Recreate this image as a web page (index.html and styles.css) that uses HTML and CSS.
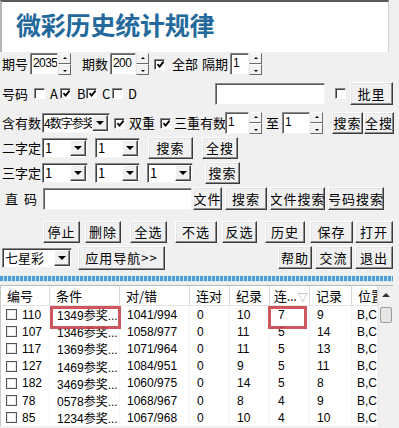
FILE: index.html
```html
<!DOCTYPE html>
<html lang="zh">
<head>
<meta charset="utf-8">
<title>微彩历史统计规律</title>
<link rel="stylesheet" href="styles.css">
</head>
<body>
<div class="app">
  <div class="header"><div class="title">微彩历史统计规律</div></div>

  <div class="row r1">
    <span class="lbl ml-2 w-28">期号</span>
    <div class="spin w-41"><span class="field">2035</span><span class="sbtns"><i class="sb up"></i><i class="sb dn"></i></span></div>
    <span class="lbl ml-11 w-28">期数</span>
    <div class="spin w-39"><span class="field">200</span><span class="sbtns"><i class="sb up"></i><i class="sb dn"></i></span></div>
    <span class="cb on ml-5"><svg viewBox="0 0 9 9"><path d="M1.5 4.2 L3.6 6.5 L7.6 1.6"/></svg></span>
    <span class="lbl ml-7 w-30">全部</span>
    <span class="lbl w-28">隔期</span>
    <div class="spin w-32"><span class="field">1</span><span class="sbtns"><i class="sb up"></i><i class="sb dn"></i></span></div>
  </div>

  <div class="row r2">
    <span class="lbl ml-2 w-28">号码</span>
    <span class="cb ml-4"></span>
    <span class="lbl ml-5 w-10">A</span>
    <span class="cb on"><svg viewBox="0 0 9 9"><path d="M1.5 4.2 L3.6 6.5 L7.6 1.6"/></svg></span>
    <span class="lbl ml-6 w-9">B</span>
    <span class="cb on"><svg viewBox="0 0 9 9"><path d="M1.5 4.2 L3.6 6.5 L7.6 1.6"/></svg></span>
    <span class="lbl ml-5 w-10">C</span>
    <span class="cb"></span>
    <span class="lbl ml-5 w-10">D</span>
    <span class="field input ml-77 w-110 h-21"></span>
    <span class="cb ml-10"></span>
    <span class="btn ml-4 w-43 h-23">批里</span>
  </div>

  <div class="row r3">
    <span class="lbl ml-2 w-40">含有数</span>
    <div class="combo w-68"><span class="ctext small">4数字参奖</span><span class="dd"><i class="tri"></i></span></div>
    <span class="cb on ml-4"><svg viewBox="0 0 9 9"><path d="M1.5 4.2 L3.6 6.5 L7.6 1.6"/></svg></span>
    <span class="lbl ml-4 w-31">双重</span>
    <span class="cb on"><svg viewBox="0 0 9 9"><path d="M1.5 4.2 L3.6 6.5 L7.6 1.6"/></svg></span>
    <span class="lbl ml-3 w-51">三重有数</span>
    <div class="spin w-37"><span class="field">1</span><span class="sbtns"><i class="sb up"></i><i class="sb dn"></i></span></div>
    <span class="lbl ml-4 w-16">至</span>
    <div class="spin w-41"><span class="field">1</span><span class="sbtns"><i class="sb up"></i><i class="sb dn"></i></span></div>
    <span class="btn ml-9 w-31 h-22">搜索</span>
    <span class="btn ml-1 w-30 h-22">全搜</span>
  </div>

  <div class="row r4">
    <span class="lbl ml-2 w-40">二字定</span>
    <div class="combo w-46"><span class="ctext">1</span><span class="dd"><i class="tri"></i></span></div>
    <div class="combo ml-7 w-45"><span class="ctext">1</span><span class="dd"><i class="tri"></i></span></div>
    <span class="btn ml-8 w-45 h-22">搜索</span>
    <span class="btn ml-9 w-36 h-22">全搜</span>
  </div>

  <div class="row r5">
    <span class="lbl ml-2 w-40">三字定</span>
    <div class="combo w-46"><span class="ctext">1</span><span class="dd"><i class="tri"></i></span></div>
    <div class="combo ml-7 w-45"><span class="ctext">1</span><span class="dd"><i class="tri"></i></span></div>
    <div class="combo ml-7 w-46"><span class="ctext">1</span><span class="dd"><i class="tri"></i></span></div>
    <span class="btn ml-12 w-35 h-22">搜索</span>
  </div>

  <div class="row r6">
    <span class="lbl ml-5 w-38 zm">直 码</span>
    <span class="field input w-149 h-22"></span>
    <span class="btn ml-1 w-29 h-23">文件</span>
    <span class="btn ml-3 w-42 h-23">搜索</span>
    <span class="btn ml-3 w-55 h-23">文件搜索</span>
    <span class="btn ml-3 w-56 h-23">号码搜索</span>
  </div>

  <div class="row r7">
    <span class="btn ml-43 w-37 h-22">停止</span>
    <span class="btn ml-5 w-36 h-22">删除</span>
    <span class="btn ml-9 w-37 h-22">全选</span>
    <span class="btn ml-8 w-42 h-22">不选</span>
    <span class="btn ml-5 w-35 h-22">反选</span>
    <span class="btn ml-8 w-40 h-22">历史</span>
    <span class="btn ml-5 w-43 h-22">保存</span>
    <span class="btn ml-2 w-38 h-22">打开</span>
  </div>

  <div class="row r8">
    <div class="combo ml-2 w-70 h-19"><span class="ctext">七星彩</span><span class="dd"><i class="tri"></i></span></div>
    <span class="btn ml-6 w-87 h-24">应用导航&gt;&gt;</span>
    <span class="btn ml-113 w-34 h-23">帮助</span>
    <span class="btn ml-3 w-37 h-23">交流</span>
    <span class="btn ml-3 w-38 h-23">退出</span>
  </div>

  <div class="strip"></div>

  <div class="grid">
    <div class="list">
      <div class="thead">
        <span class="c1">编号</span><span class="c2">条件</span><span class="c3">对/错</span><span class="c4">连对</span><span class="c5">纪录</span><span class="c6">连...<i class="sort">▽</i></span><span class="c7">记录</span><span class="c8">位置</span>
      </div>
      <div class="tr"><span class="c1"><i class="tcb"></i>110</span><span class="c2">1349参奖...</span><span class="c3">1041/994</span><span class="c4">0</span><span class="c5">10</span><span class="c6">7</span><span class="c7">9</span><span class="c8">B,C</span></div>
      <div class="tr"><span class="c1"><i class="tcb"></i>107</span><span class="c2">1346参奖...</span><span class="c3">1058/977</span><span class="c4">0</span><span class="c5">11</span><span class="c6">5</span><span class="c7">14</span><span class="c8">B,C</span></div>
      <div class="tr"><span class="c1"><i class="tcb"></i>117</span><span class="c2">1369参奖...</span><span class="c3">1071/964</span><span class="c4">0</span><span class="c5">11</span><span class="c6">5</span><span class="c7">13</span><span class="c8">B,C</span></div>
      <div class="tr"><span class="c1"><i class="tcb"></i>127</span><span class="c2">1469参奖...</span><span class="c3">1084/951</span><span class="c4">0</span><span class="c5">9</span><span class="c6">5</span><span class="c7">11</span><span class="c8">B,C</span></div>
      <div class="tr"><span class="c1"><i class="tcb"></i>182</span><span class="c2">3469参奖...</span><span class="c3">1060/975</span><span class="c4">0</span><span class="c5">14</span><span class="c6">5</span><span class="c7">8</span><span class="c8">B,C</span></div>
      <div class="tr"><span class="c1"><i class="tcb"></i>78</span><span class="c2">0578参奖...</span><span class="c3">1068/967</span><span class="c4">0</span><span class="c5">8</span><span class="c6">4</span><span class="c7">9</span><span class="c8">B,C</span></div>
      <div class="tr"><span class="c1"><i class="tcb"></i>85</span><span class="c2">1234参奖...</span><span class="c3">1067/968</span><span class="c4">0</span><span class="c5">10</span><span class="c6">4</span><span class="c7">10</span><span class="c8">B,C</span></div>
    </div>
    <div class="vscroll"><i class="uparr"></i><i class="thumb"></i></div>
    <div class="mark m1"></div>
    <div class="mark m2"></div>
  </div>
</div>
</body>
</html>
```

FILE: styles.css
```css
* { box-sizing: border-box; margin: 0; padding: 0; }
html, body { margin: 0; background: #f0f0f0; }
body {
  width: 399px; height: 428px; overflow: hidden;
  font-family: "Noto Sans CJK SC", "Liberation Sans", sans-serif;
  font-size: 13px; color: #000;
}
.app { position: relative; width: 399px; height: 428px; background: #f0f0f0; }

.header {
  height: 52px; width: 389px; background: #fff;
  border-top: 2px solid #5a5a5a; border-left: 2px solid #b5b5b5; border-right: 1px solid #cfcfcf;
  padding: 7px 0 0 14px;
}
.title {
  font-size: 25px; font-weight: bold; line-height: 31px; color: #23699c;
  letter-spacing: -0.2px;
}

.row { display: flex; align-items: center; white-space: nowrap; }
.r1 { height: 22px; margin-top: 1px; }
.r2 { height: 23px; margin-top: 7px; }
.r3 { height: 22px; margin-top: 7px; }
.r4 { height: 22px; margin-top: 3px; }
.r5 { height: 23px; margin-top: 2px; }
.r6 { height: 23px; margin-top: 3px; }
.r7 { height: 22px; margin-top: 11px; }
.r8 { height: 25px; margin-top: 2px; }

.lbl { display: block; line-height: 16px; flex: none; }
.zm { word-spacing: 3px; }

/* utility sizes */
.ml-1{margin-left:1px}.ml-2{margin-left:2px}.ml-3{margin-left:3px}.ml-4{margin-left:4px}.ml-5{margin-left:5px}
.ml-6{margin-left:6px}.ml-7{margin-left:7px}.ml-8{margin-left:8px}.ml-9{margin-left:9px}.ml-10{margin-left:10px}
.ml-11{margin-left:11px}.ml-12{margin-left:12px}.ml-43{margin-left:43px}.ml-77{margin-left:77px}.ml-113{margin-left:113px}
.w-9{width:9px}.w-10{width:10px}.w-16{width:16px}.w-28{width:28px}.w-29{width:29px}.w-30{width:30px}.w-31{width:31px}
.w-32{width:32px}.w-34{width:34px}.w-35{width:35px}.w-36{width:36px}.w-37{width:37px}.w-38{width:38px}.w-39{width:39px}
.w-40{width:40px}.w-41{width:41px}.w-42{width:42px}.w-43{width:43px}.w-45{width:45px}.w-46{width:46px}.w-51{width:51px}
.w-55{width:55px}.w-56{width:56px}.w-68{width:68px}.w-70{width:70px}.w-87{width:87px}.w-110{width:110px}.w-149{width:149px}
.h-19{height:19px}.h-21{height:21px}.h-22{height:22px}.h-23{height:23px}.h-24{height:24px}

/* sunken field */
.field {
  display: block; background: #fff; height: 22px;
  border: 1px solid; border-color: #8a8a8a #f4f4f4 #f4f4f4 #8a8a8a;
  box-shadow: inset 1px 1px 0 #5a5a5a;
  font-family: "Liberation Sans", sans-serif; font-size: 12px; letter-spacing: -0.6px; line-height: 19px;
  padding-left: 2px; overflow: hidden; flex: none; white-space: nowrap;
}
.input { flex: none; }

.spin { display: flex; height: 22px; flex: none; }
.spin .field { flex: 1; width: auto; }
.sbtns { display: flex; flex-direction: column; width: 13px; flex: none; }
.sb {
  display: block; position: relative; height: 11px; background: #f2f2f2;
  border: 1px solid; border-color: #fff #6a6a6a #6a6a6a #e6e6e6;
}
.sb::after {
  content: ""; position: absolute; left: 50%; top: 50%; margin-left: -2px;
  border-left: 2px solid transparent; border-right: 2px solid transparent;
}
.sb.up::after { margin-top: -2px; border-bottom: 2px solid #000; }
.sb.dn::after { margin-top: 0; border-top: 2px solid #000; }

/* checkbox */
.cb {
  display: block; width: 11px; height: 11px; flex: none; background: #fff;
  border: 1px solid; border-color: #888 #fff #fff #888;
  box-shadow: inset 1px 1px 0 #404040;
  position: relative;
}
.cb svg { position: absolute; left: 1px; top: 0px; width: 9px; height: 9px; }
.cb svg path { fill: none; stroke: #000; stroke-width: 1.8; }

/* combo */
.combo {
  display: flex; height: 20px; flex: none; background: #fff;
  border: 1px solid; border-color: #888 #f4f4f4 #f4f4f4 #888;
  box-shadow: inset 1px 1px 0 #404040;
}
.ctext { flex: 1; padding-left: 2px; line-height: 17px; overflow: hidden; white-space: nowrap; font-size: 13px; }
.ctext.small { font-size: 12px; letter-spacing: -1px; padding-left: 1px; }
.dd {
  width: 16px; flex: none; margin: 1px 1px 1px 0; background: #f0f0f0;
  border: 1px solid; border-color: #fff #404040 #404040 #fff;
  box-shadow: inset -1px -1px 0 #8a8a8a;
  display: flex; align-items: center; justify-content: center;
}
.tri {
  display: block; width: 0; height: 0;
  border-left: 4px solid transparent; border-right: 4px solid transparent;
  border-top: 4px solid #000;
}

/* raised button */
.btn {
  display: flex; align-items: center; justify-content: center; flex: none;
  background: #f0f0f0; overflow: hidden;
  border: 1px solid; border-color: #fff #3c3c3c #3c3c3c #fff;
  box-shadow: inset -1px -1px 0 #8c8c8c, inset 1px 1px 0 #e4e4e4;
  font-size: 13px; letter-spacing: 1px; line-height: 16px;
}

/* progress strip */
.strip {
  margin-top: 5px; height: 7px; width: 393px;
  background:
    repeating-linear-gradient(90deg, #4b9fd6 0 3px, #d3e6f2 3px 4px);
  border-top: 1px solid #dfe9f0; border-bottom: 1px solid #dfe9f0;
}

/* list view */
.grid {
  position: relative; margin-top: 3px; width: 393px; height: 141px;
  background: #fff; border-top: 1px solid #b9b9b9; border-left: 1px solid #c9c9c9;
  display: flex;
}
.list { width: 377px; flex: none; }
.thead, .tr { display: flex; }
.thead { height: 20px; border-bottom: 1px solid #e4e4e4; }
.thead span {
  display: block; border-right: 1px solid #dadada; padding-left: 6px;
  line-height: 19px; font-size: 13px; overflow: hidden; white-space: nowrap;
}
.thead .c6 { padding-left: 4px; letter-spacing: -0.3px; }
.sort { font-style: normal; color: #999; font-size: 10px; margin-left: 1px; }
.tr { height: 17.2px; }
.tr:first-of-type { margin-top: 1px; }
.tr span {
  display: flex; align-items: center; padding-left: 7px; overflow: hidden; white-space: nowrap;
  font-family: "Liberation Sans", "Noto Sans CJK SC", sans-serif; font-size: 12px;
  border-right: 1px dotted #ececec;
}
.tr .c1 { padding-left: 5px; }
.c1 { width: 49px; flex: none; }
.c2 { width: 70px; flex: none; }
.c3 { width: 70px; flex: none; }
.c4 { width: 40px; flex: none; }
.c5 { width: 40px; flex: none; }
.c6 { width: 40px; flex: none; }
.c7 { width: 42px; flex: none; }
.c8 { width: 26px; flex: none; }
.tr .c6 { padding-left: 8px; }
.tr .c8 { padding-left: 5px; }
.tcb {
  display: block; width: 11px; height: 11px; margin-right: 5px; flex: none;
  border: 1px solid #555; background: #fff; box-shadow: inset 0 0 0 1px #e8e8e8;
}

.vscroll {
  position: relative; width: 15px; flex: none; background: #f0f0f0;
  border-left: 1px solid #e8e8e8;
}
.uparr {
  position: absolute; left: 3px; top: 7px; width: 0; height: 0;
  border-left: 4px solid transparent; border-right: 4px solid transparent;
  border-bottom: 4px solid #333;
}
.thumb {
  position: absolute; left: 1px; top: 21px; width: 12px; height: 16px;
  background: #e6e6e6; border: 1px solid #9a9a9a; border-radius: 2px;
}

.mark {
  position: absolute; border: 3px solid #c8454b; opacity: 0.9;
}
.m1 { left: 49px; top: 20px; width: 71px; height: 23px; }
.m2 { left: 267px; top: 20px; width: 39px; height: 23px; }
```
